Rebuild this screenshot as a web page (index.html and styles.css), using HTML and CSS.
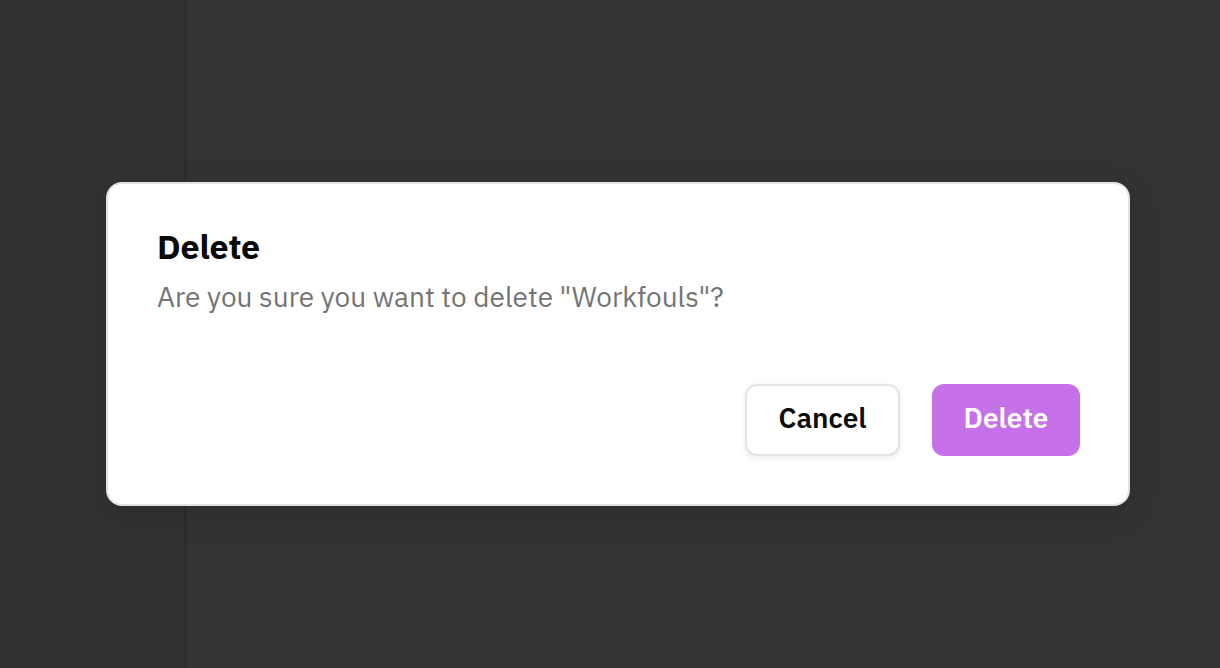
FILE: index.html
```html
<!DOCTYPE html>
<html>
<head>
<meta charset="utf-8">
<link rel="stylesheet" href="styles.css">
</head>
<body>
<div class="app">
  <aside class="sidebar"></aside>
  <main class="main"></main>
</div>
<div class="overlay">
  <div class="modal">
    <h2 class="title">Delete</h2>
    <p class="message">Are you sure you want to delete "Workfouls"?</p>
    <div class="actions">
      <button class="btn btn-cancel">Cancel</button>
      <button class="btn btn-delete">Delete</button>
    </div>
  </div>
</div>
</body>
</html>
```
FILE: styles.css
```css
* { box-sizing: border-box; }
html, body {
  margin: 0;
  width: 1220px;
  height: 668px;
  overflow: hidden;
  background: #333333;
  font-family: "IBM Plex Sans", Inter, "Noto Sans", sans-serif;
}
.app {
  display: flex;
  height: 668px;
}
.sidebar {
  width: 186px;
  flex: none;
  background: #323232;
  border-right: 2px solid #2b2b2b;
}
.main {
  flex: 1;
  background: #333333;
}
.overlay {
  position: absolute;
  inset: 0;
  display: flex;
  align-items: flex-start;
  justify-content: flex-start;
  padding: 182px 0 0 106px;
}
.modal {
  width: 1024px;
  height: 324px;
  background: #ffffff;
  border: 2px solid #e2e2e2;
  border-radius: 16px;
  box-shadow: 0 8px 30px rgba(0,0,0,0.15);
  padding: 41px 48px 48px 49px;
  display: flex;
  flex-direction: column;
}
.title {
  margin: 0;
  font-size: 34px;
  font-weight: 700;
  color: #0a0a0a;
  line-height: 42px;
  letter-spacing: -0.2px;
}
.message {
  margin: 12px 0 0;
  font-size: 28px;
  color: #747474;
  line-height: 36px;
}
.actions {
  margin-top: auto;
  display: flex;
  justify-content: flex-end;
  gap: 32px;
}
.btn {
  height: 72px;
  border-radius: 12px;
  font-family: inherit;
  font-size: 28px;
  font-weight: 600;
  padding: 0 0 5px;
}
.btn-cancel {
  width: 155px;
  background: #fff;
  border: 2px solid #e4e4e4;
  color: #0a0a0a;
  box-shadow: 0 2px 6px rgba(0,0,0,0.08);
}
.btn-delete {
  width: 148px;
  background: #c771e8;
  border: none;
  color: #fff;
}
```
